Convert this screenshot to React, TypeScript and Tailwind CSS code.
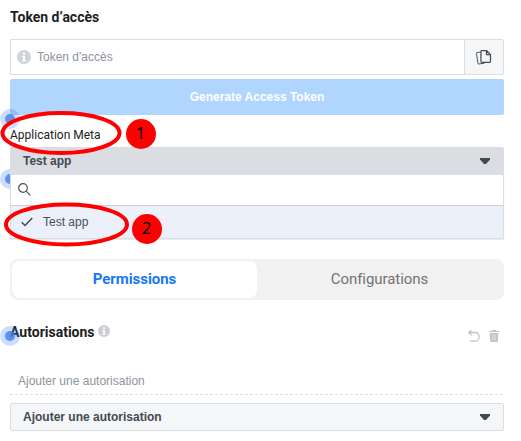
import React from "react";

const arial = "font-['Liberation_Sans',Arial,sans-serif]";
const roboto = "font-['Roboto',sans-serif]";

function InfoIcon({ size, color = "#d0d3d9" }: { size: number; color?: string }) {
  return (
    <svg width={size} height={size} viewBox="0 0 14 14" className="block shrink-0">
      <circle cx="7" cy="7" r="7" fill={color} />
      <path d="M6 2.6h2v2H6zM5 5.8h3v4.4h1v1.3H5v-1.3h1V7H5z" fill="#fff" />
    </svg>
  );
}

function Caret() {
  return (
    <svg width="10" height="6" viewBox="0 0 10 6" className="block shrink-0">
      <path d="M0 0h10v1.5L6 6H4L0 1.5z" fill="#444950" />
    </svg>
  );
}

function CopyIcon() {
  return (
    <svg width="17" height="17" viewBox="0 0 18 18" fill="none" stroke="#444950" strokeWidth="1.3" strokeLinejoin="round">
      <path d="M6 3.2 1.9 3.9Q1.4 4 1.5 4.5l1.7 10.9q.1.6.7.5l6.2-.9" strokeWidth="1" />
      <path d="M7.2 1.6h5L16.4 6v7.3q0 .9-.9.9H7.2q-.9 0-.9-.9V2.5q0-.9.9-.9zM12.2 1.6V6h4.2" />
    </svg>
  );
}

function Halo({ className }: { className: string }) {
  return (
    <svg width="20" height="20" viewBox="0 0 20 20" className={`absolute left-0 ${className}`}>
      <circle cx="10" cy="10" r="10" fill="#3578f6" fillOpacity="0.25" />
      <circle cx="10" cy="10" r="5" fill="#4280e8" fillOpacity="0.8" />
    </svg>
  );
}

function Marker({ n, className }: { n: number; className: string }) {
  return (
    <div className={`absolute flex size-[30px] items-center justify-center rounded-full bg-[#ff0000] pb-[2px] font-['Noto_Sans',sans-serif] text-[17px] leading-none text-black ${className}`}>
      {n}
    </div>
  );
}

export default function App() {
  return (
    <div className={`relative h-[441px] w-[521px] overflow-hidden bg-white pl-[10px] pr-[17px] text-[12px] text-[#4b4f56] ${arial}`}>
      <h2 className={`flex h-[39px] items-center pb-[5px] text-[14px] font-bold text-[#1c1e21] ${roboto}`}>Token d’accès</h2>

      <div className="flex h-9 rounded-r-[2px] border border-[#dadde1]">
        <div className="flex flex-1 items-center gap-[6px] pl-[6px] text-[#8d949e]">
          <InfoIcon size={14} />
          <span>Token d'accès</span>
        </div>
        <button className="flex w-[39px] items-center justify-center border-l border-[#dadde1] bg-[#f5f6f7] pr-px">
          <CopyIcon />
        </button>
      </div>

      <button className="mt-1 flex h-9 w-full items-center justify-center rounded-[2px] bg-[#b0d5ff] font-bold text-white">
        Generate Access Token
      </button>

      <div className={`flex h-8 items-center pt-[7px] text-[#1c1e21] ${roboto}`}>Application Meta</div>

      <div className="relative z-10 flex h-7 items-center justify-between rounded-t-[2px] bg-[#dadde1] pl-[13px] pr-[14px] font-bold text-[#444950]">
        <span>Test app</span>
        <Caret />
      </div>
      <div className="relative z-10 h-16 border-x border-b border-[#dadde1] bg-white shadow-[0_1px_1px_rgba(0,0,0,0.08)]">
        <div className="flex h-[31px] items-center border-b border-[#ccced2] pb-[2px] pl-[7px]">
          <svg width="13" height="13" viewBox="0 0 13 13" fill="none" stroke="#4b4f56" strokeWidth="1.2">
            <circle cx="5" cy="5" r="4.3" />
            <path d="M8.2 8.2 12.3 12.3" />
          </svg>
        </div>
        <div className="flex h-8 items-center gap-[10px] bg-[#ebf0fa] pl-[10px]">
          <svg width="12" height="10" viewBox="0 0 12 10" fill="none" stroke="#444950" strokeWidth="1.4">
            <path d="M.7 5.2 4 8.5 11.3 1" />
          </svg>
          <span>Test app</span>
        </div>
      </div>

      <div className={`mt-5 flex h-[41px] rounded-lg bg-[#f1f1f1] p-[2px] text-[15px] ${roboto}`}>
        <div className="flex w-[245px] items-center justify-center rounded-lg bg-white font-bold tracking-[-0.05px] text-[#1877f2]">Permissions</div>
        <div className="flex flex-1 items-center justify-center tracking-[-0.05px] text-[#737373]">Configurations</div>
      </div>

      <div className="flex h-[65px] items-center justify-between pr-[5px]">
        <div className="flex items-center gap-[3px]">
          <h2 className={`text-[14px] font-bold text-[#1c1e21] ${roboto}`}>Autorisations</h2>
          <div className="pb-[3px]">
            <InfoIcon size={12} color="#ccd0d5" />
          </div>
        </div>
        <div className="flex items-center gap-[9px] pt-[7px]">
          <svg width="12" height="12" viewBox="0 0 12 12" fill="none" stroke="#bec3c9" strokeWidth="1.3">
            <path d="M3.5.3.8 2.5l2.7 2.8M1 2.5h6.3c2.2 0 3.8 1.9 3.8 4.2s-1.6 4.5-3.8 4.5H2" />
          </svg>
          <svg width="10" height="12" viewBox="0 0 10 12" fill="#bec3c9">
            <path d="M0 1h3V0h4v1h3v1H0zM.7 3h8.6l-.5 8q-.1 1-1 1H2.2q-.9 0-1-1z" />
            <path d="M3.3 4.5v6M5 4.5v6M6.7 4.5v6" stroke="#e8eaed" strokeWidth=".7" />
          </svg>
        </div>
      </div>

      <div className="flex h-[29px] items-center pl-2 pt-[3px] text-[#8d949e]">Ajouter une autorisation</div>
      <div className="h-px bg-[repeating-linear-gradient(90deg,#dadde1_0_3px,transparent_3px_5px)]" />
      <div className="mt-2 flex h-7 items-center justify-between rounded-[2px] border border-[#dadde1] bg-[#f5f6f7] pl-3 pr-[13px] font-bold text-[#444950]">
        <span>Ajouter une autorisation</span>
        <Caret />
      </div>

      <Halo className="top-[109px]" />
      <Halo className="top-[169px]" />
      <Halo className="top-[326px]" />
      <svg width="521" height="441" className="pointer-events-none absolute left-0 top-0 z-20" fill="none" stroke="#ff0000" strokeWidth="4">
        <ellipse cx="61" cy="133" rx="58.5" ry="20" />
        <ellipse cx="66.5" cy="224.5" rx="60.5" ry="20" />
      </svg>
      <Marker n={1} className="left-[125.5px] top-[118.5px] z-20" />
      <Marker n={2} className="left-[131.5px] top-[213.5px] z-20" />
    </div>
  );
}
